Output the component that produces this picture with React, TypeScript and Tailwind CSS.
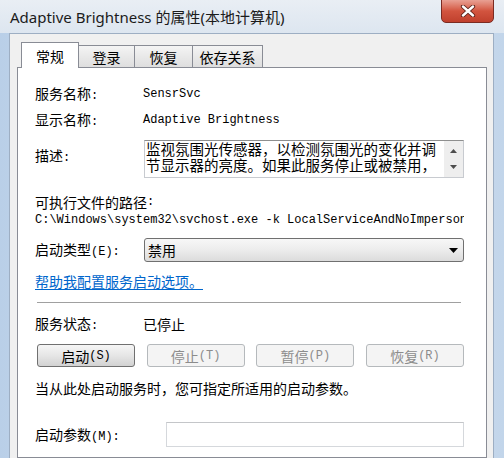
import type { ReactNode } from 'react'

function M({ children }: { children: ReactNode }) {
  return <span className="font-['Liberation_Mono','Noto_Sans_CJK_SC',monospace] text-[12px]">{children}</span>
}

function Tab({ label, w, active }: { label: string; w: string; active?: boolean }) {
  if (active) {
    return (
      <div className={`${w} h-[26px] -mb-px relative z-10 bg-white border border-b-0 border-[#898c95] flex items-center justify-center text-[14px] leading-[18px]`}>
        {label}
      </div>
    )
  }
  return (
    <div className={`${w} h-[22px] -ml-px bg-linear-to-b from-[#f4f4f4] to-[#dedede] border border-b-0 border-[#898c95] flex items-center justify-center text-[14px] leading-[18px]`}>
      {label}
    </div>
  )
}

function Btn({ label, k, disabled }: { label: string; k: string; disabled?: boolean }) {
  return (
    <div
      className={`w-[98px] h-[23px] rounded-[3px] border flex items-center justify-center text-[14px] leading-[18px] ${
        disabled
          ? 'border-[#b5b9bc] bg-[#f4f4f4] text-[#8c8c8c]'
          : 'border-[#707070] bg-linear-to-b from-[#f6f6f6] via-[#e6e6e6] to-[#d2d2d2] text-black'
      }`}
    >
      {label}
      <M>({k})</M>
    </div>
  )
}

export default function App() {
  return (
    <div className="w-[504px] h-[458px] overflow-hidden flex flex-col bg-linear-to-r from-[#b9cfe8] via-[#e4ebf3] to-[#c2d5ea] text-black font-['Noto_Sans_CJK_SC',sans-serif]">
      {/* title bar */}
      <div className="h-[33px] flex justify-between items-start bg-linear-to-b from-[#e9eef4] to-[#dde6f0]">
        <span className="pl-[10px] pt-[7px] text-[15px] leading-[20px] text-[#1b1b1b] font-['Noto_Sans','Noto_Sans_CJK_SC',sans-serif]">
          Adaptive Brightness 的属性(本地计算机)
        </span>
        <div className="w-[53px] h-[24px] mr-[10px] -mt-[1px] rounded-b-[5px] border border-[#7b2b22] bg-linear-to-b from-[#e8a093] via-[#d2543f] to-[#c0402d] flex items-center justify-center">
          <svg width="16" height="12" viewBox="0 0 16 12">
            <path d="M3 1.5 L13 10.5 M13 1.5 L3 10.5" stroke="#5a2018" strokeWidth="4.2" strokeLinecap="round" />
            <path d="M3 1.5 L13 10.5 M13 1.5 L3 10.5" stroke="#ffffff" strokeWidth="2.4" strokeLinecap="round" />
          </svg>
        </div>
      </div>

      {/* dialog client */}
      <div className="flex-1 ml-[9px] mr-[10px] border border-b-0 border-[#9daec3] bg-[#f0f0f0] pt-[8px] pl-[7px] pr-[6px] flex flex-col">
        <div className="h-[25px] flex items-end pl-[4px]">
          <Tab label="常规" w="w-[58px]" active />
          <Tab label="登录" w="w-[57px]" />
          <Tab label="恢复" w="w-[59px]" />
          <Tab label="依存关系" w="w-[71px]" />
        </div>

        <div className="flex-1 bg-white border border-[#898c95] pl-[17px] pr-[22px] pt-[13px] flex flex-col text-[14px] leading-[18px]">
          <div className="h-[26px] flex items-center">
            <span className="w-[108px]">服务名称<M>:</M></span>
            <M>SensrSvc</M>
          </div>
          <div className="h-[26px] flex items-center">
            <span className="w-[108px]">显示名称<M>:</M></span>
            <M>Adaptive Brightness</M>
          </div>

          <div className="mt-[7px] flex items-start">
            <span className="w-[109px] pt-[6px]">描述<M>:</M></span>
            <div className="flex-1 h-[38px] border border-[#c8cbd0] border-t-[#8e8f8f] flex">
              <div className="flex-1 pl-px text-[14.5px] leading-[16px] overflow-hidden">
                <div>监视氛围光传感器，以检测氛围光的变化并调</div>
                <div>节显示器的亮度。如果此服务停止或被禁用，</div>
              </div>
              <div className="w-[19px] bg-[#eeeeee] flex flex-col items-center justify-around py-[2px]">
                <svg width="7" height="4" viewBox="0 0 7 4"><path d="M0 4 L3.5 0 L7 4 Z" fill="#4d4d4d" /></svg>
                <svg width="7" height="4" viewBox="0 0 7 4"><path d="M0 0 L7 0 L3.5 4 Z" fill="#4d4d4d" /></svg>
              </div>
            </div>
          </div>

          <div className="mt-[15px] h-[18px] flex items-center">可执行文件的路径<M>:</M></div>
          <div className="h-[18px] flex items-center whitespace-nowrap overflow-hidden">
            <M>C:\Windows\system32\svchost.exe -k LocalServiceAndNoImpersonation</M>
          </div>

          <div className="mt-[9px] flex items-center">
            <span className="w-[109px]">启动类型<M>(E):</M></span>
            <div className="flex-1 h-[24px] rounded-[3px] border border-[#707070] bg-linear-to-b from-[#f7f7f7] via-[#ececec] to-[#dcdcdc] flex items-center justify-between pl-[3px] pr-[5px]">
              <span>禁用</span>
              <svg width="9" height="5" viewBox="0 0 9 5"><path d="M0 0 L9 0 L4.5 5 Z" fill="#000" /></svg>
            </div>
          </div>

          <div className="mt-[10px] h-[18px] flex items-center">
            <span className="text-[#0066cc] underline underline-offset-2">帮助我配置服务启动选项。</span>
          </div>

          <div className="mt-[12px] h-px bg-[#a0a0a0] mr-[3px] ml-[2px]" />

          <div className="mt-[12px] h-[18px] flex items-center">
            <span className="w-[108px]">服务状态<M>:</M></span>
            <span>已停止</span>
          </div>

          <div className="mt-[11px] flex justify-between pl-[2px]">
            <Btn label="启动" k="S" />
            <Btn label="停止" k="T" disabled />
            <Btn label="暂停" k="P" disabled />
            <Btn label="恢复" k="R" disabled />
          </div>

          <div className="mt-[12px] h-[18px] flex items-center whitespace-nowrap">
            当从此处启动服务时，您可指定所适用的启动参数。
          </div>

          <div className="mt-[25px] flex items-center">
            <span className="w-[131px] pt-[2px]">启动参数<M>(M):</M></span>
            <div className="flex-1 h-[25px] border border-[#d5d8dc] border-t-[#c4c6c9] bg-white" />
          </div>
        </div>
      </div>
    </div>
  )
}
